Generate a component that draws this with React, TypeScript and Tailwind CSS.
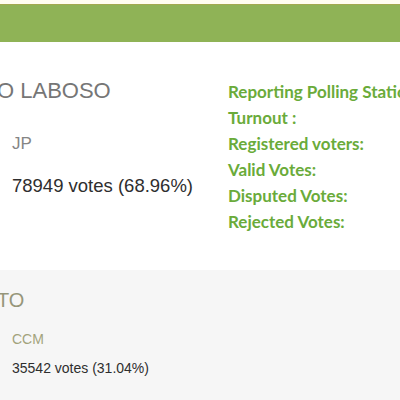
import React from 'react';

const stats = [
  'Reporting Polling Stations:',
  'Turnout :',
  'Registered voters:',
  'Valid Votes:',
  'Disputed Votes:',
  'Rejected Votes:',
];

const App: React.FC = () => {
  return (
    <div className="w-[400px] h-[400px] overflow-hidden bg-white font-['Liberation_Sans',Arial,sans-serif]">
      <div className="h-1 bg-[#fffdf0]" />
      <div className="h-[38px] bg-[#8fb356] border-t border-[#a3a94f]" />

      {/* Winner */}
      <div className="flex h-[228px]">
        <div className="w-[228px] shrink-0 overflow-hidden">
          <div className="mt-[37px] ml-[-3px] text-[22px] leading-[24px] text-[#767676] whitespace-nowrap">
            O LABOSO
          </div>
          <div className="mt-[31px] pl-3 text-[17px] leading-[20px] text-[#858585]">JP</div>
          <div className="mt-[21px] pl-3 text-[18.5px] leading-[22px] text-[#2e2e2e] whitespace-nowrap">
            78949 votes (68.96%)
          </div>
        </div>
        <div className="pt-[37px] font-['Lato',sans-serif] font-bold text-[17px] leading-[26px] text-[#6aab3a] whitespace-nowrap">
          {stats.map((s) => (
            <div key={s}>{s}</div>
          ))}
        </div>
      </div>

      {/* Runner up */}
      <div className="h-[130px] bg-[#f6f6f6] overflow-hidden">
        <div className="pt-[18px] ml-[-3px] text-[20px] leading-[24px] text-[#96967a] whitespace-nowrap">TO</div>
        <div className="mt-[18px] pl-3 text-[14px] leading-[18px] text-[#a3a37c]">CCM</div>
        <div className="mt-[11px] pl-3 text-[14px] leading-[18px] text-[#2e2e2e] whitespace-nowrap">
          35542 votes (31.04%)
        </div>
      </div>
    </div>
  );
};

export default App;
